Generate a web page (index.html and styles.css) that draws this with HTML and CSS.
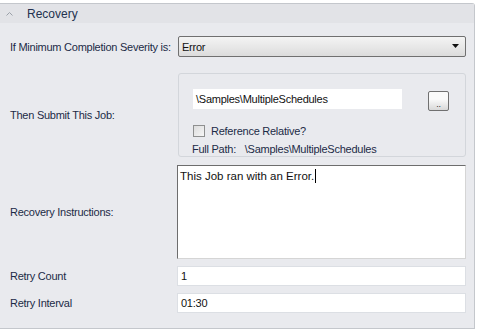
FILE: index.html
```html
<!DOCTYPE html>
<html lang="en">
<head>
  <meta charset="UTF-8">
  <title>Recovery</title>
  <link rel="stylesheet" href="styles.css">
</head>
<body>

<div class="panel">
  <div class="panel-head">
    <svg class="chevron" width="7" height="4" viewBox="0 0 7 4"><path d="M0.5 3.5 L3.5 0.5 L6.5 3.5" fill="none" stroke="#9aa0a8" stroke-width="1"/></svg>
    <span>Recovery</span>
  </div>

  <div class="form">
    <label class="lbl">If Minimum Completion Severity is:</label>
    <div class="select">
      <span>Error</span>
      <svg width="7" height="5" viewBox="0 0 7 5"><path d="M0 0 H7 L3.5 4 Z" fill="#111"/></svg>
    </div>

    <label class="lbl job-row">Then Submit This Job:</label>
    <div class="group job-row">
      <div class="path-row">
        <div class="path-input">\Samples\MultipleSchedules</div>
        <div class="dots-btn">..</div>
      </div>
      <div class="check-row">
        <span class="check"></span>
        <span>Reference Relative?</span>
      </div>
      <div class="full-path">
        <span>Full Path:</span>
        <span>\Samples\MultipleSchedules</span>
      </div>
    </div>

    <label class="lbl memo-row">Recovery Instructions:</label>
    <div class="memo memo-row">This Job ran with an Error.<span class="caret"></span></div>

    <label class="lbl spaced">Retry Count</label>
    <div class="text-input spaced">1</div>

    <label class="lbl spaced">Retry Interval</label>
    <div class="text-input spaced">01:30</div>
  </div>
</div>

</body>
</html>
```

FILE: styles.css
```css
body { margin: 0; background: #fff; font-family: "Liberation Sans", Arial, sans-serif; font-size: 11px; letter-spacing: -0.25px; color: #1c2a46; }
.panel { margin-top: 3px; width: 474px; height: 324px; background: #e9eaee; border-top: 1px solid #c4c7cc; border-right: 1px solid #c4c7cc; border-bottom: 1px solid #c4c7cc; border-top-right-radius: 3px; }
.panel-head { height: 19px; background: #e2e3e7; display: flex; align-items: center; padding-left: 6px; color: #23324f; font-size: 12px; letter-spacing: 0; }
.panel-head .chevron { margin-right: 14px; }
.form { display: grid; grid-template-columns: 167px 289px; padding: 13px 0 0 10px; align-items: center; }
.lbl { color: #1c2a46; white-space: nowrap; }
.select { height: 19px; margin-left: 1px; border: 1px solid #707070; border-radius: 2px; background: linear-gradient(#f4f4f4, #dcdcdc); display: flex; align-items: center; justify-content: space-between; padding: 0 6px 0 3px; color: #111; }
.job-row { margin-top: 16px; }
.group { margin-left: 1px; border: 1px solid #d3d6db; border-radius: 3px; padding: 15px 0 0 14px; box-sizing: border-box; height: 84px; }
.path-row { display: flex; align-items: flex-start; }
.path-input { width: 206px; height: 20px; background: #fff; padding-left: 3px; line-height: 20px; color: #111; }
.dots-btn { margin: 2px 0 0 26px; width: 19px; height: 18px; border: 1px solid #707070; border-radius: 2px; background: linear-gradient(#fafafa 40%, #d8d8d8); text-align: center; line-height: 24px; font-size: 9px; color: #333; }
.check-row { display: flex; align-items: center; margin-top: 14px; height: 12px; }
.check { width: 10px; height: 10px; border: 1px solid #8e8f8f; background: linear-gradient(135deg, #dcdcdc, #f6f6f6); margin-right: 6px; }
.full-path { margin-top: 6px; margin-left: -1px; height: 13px; line-height: 13px; }
.full-path span:first-child { margin-right: 6px; }
.memo-row { margin-top: 8px; }
.memo { background: #fff; border-top: 1px solid #6d6d6d; border-left: 1px solid #6d6d6d; border-right: 1px solid #d5d5d5; border-bottom: 1px solid #d5d5d5; padding: 3px 0 0 2px; box-sizing: border-box; height: 94px; color: #111; font-size: 11.5px; letter-spacing: 0; }
.caret { display: inline-block; width: 1px; height: 14px; background: #000; vertical-align: -3px; margin-left: 1px; }
.text-input { height: 20px; box-sizing: border-box; background: #fff; border: 1px solid #dcdfe4; padding-left: 3px; line-height: 18px; color: #111; }
.spaced { margin-top: 7px; }
```
